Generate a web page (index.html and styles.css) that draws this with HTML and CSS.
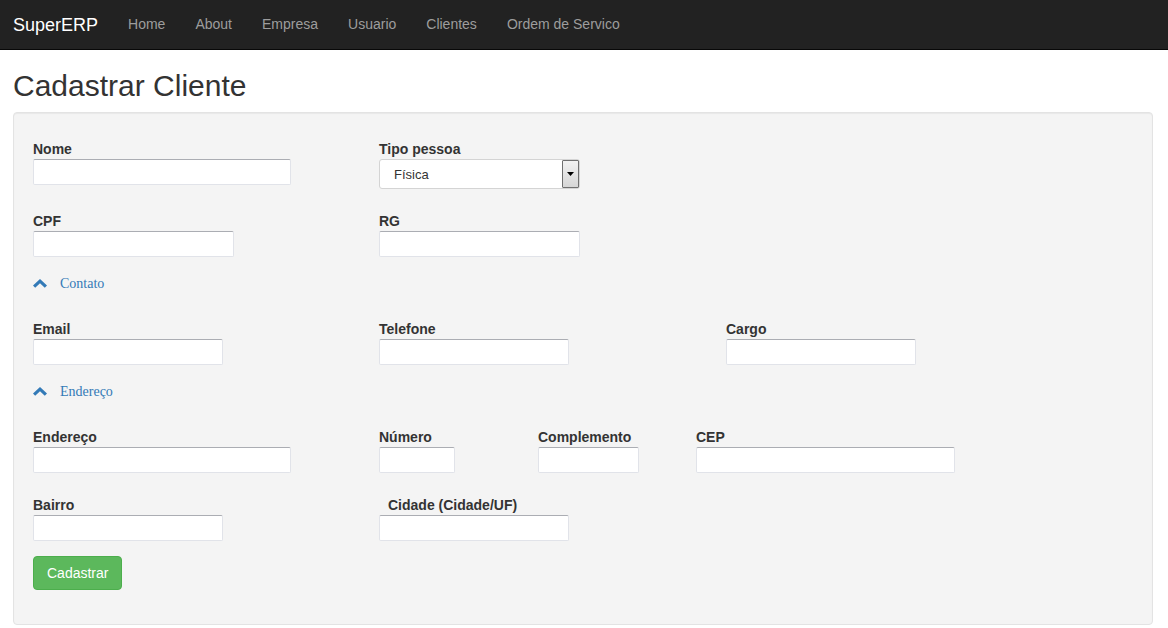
FILE: index.html
```html
<!DOCTYPE html>
<html lang="pt">
<head>
<meta charset="utf-8">
<title>Cadastrar Cliente</title>
<link rel="stylesheet" href="styles.css">
</head>
<body>
<nav class="navbar">
  <a class="brand" href="#">SuperERP</a>
  <ul class="nav">
    <li><a href="#">Home</a></li>
    <li><a href="#">About</a></li>
    <li><a href="#">Empresa</a></li>
    <li><a href="#">Usuario</a></li>
    <li><a href="#">Clientes</a></li>
    <li><a href="#">Ordem de Servico</a></li>
  </ul>
</nav>
<main class="main">
  <h2 class="title">Cadastrar Cliente</h2>
  <form class="well">
    <div class="row row-first">
      <div class="group col-4">
        <label>Nome</label>
        <input class="input w-258" type="text">
      </div>
      <div class="group col-4">
        <label>Tipo pessoa</label>
        <div class="select-wrap">
          <select class="select"><option>Física</option></select>
          <span class="select-btn"><svg width="7" height="4" viewBox="0 0 7 4"><polygon points="0,0 7,0 3.5,4" fill="#000"/></svg></span>
        </div>
      </div>
    </div>
    <div class="row row-before-link">
      <div class="group col-4">
        <label>CPF</label>
        <input class="input w-201" type="text">
      </div>
      <div class="group col-4">
        <label>RG</label>
        <input class="input w-201" type="text">
      </div>
    </div>
    <a class="toggle" href="#">
      <svg class="chev" width="14" height="9" viewBox="0 0 14 9"><polygon points="0,6.5 7,0 14,6.5 11.8,8.8 7,4.3 2.2,8.8" fill="#337ab7"/></svg>
      <span>Contato</span>
    </a>
    <div class="row row-before-link">
      <div class="group col-4">
        <label>Email</label>
        <input class="input w-190" type="text">
      </div>
      <div class="group col-4b">
        <label>Telefone</label>
        <input class="input w-190" type="text">
      </div>
      <div class="group col-4">
        <label>Cargo</label>
        <input class="input w-190" type="text">
      </div>
    </div>
    <a class="toggle" href="#">
      <svg class="chev" width="14" height="9" viewBox="0 0 14 9"><polygon points="0,6.5 7,0 14,6.5 11.8,8.8 7,4.3 2.2,8.8" fill="#337ab7"/></svg>
      <span>Endereço</span>
    </a>
    <div class="row row-mid">
      <div class="group col-4">
        <label>Endereço</label>
        <input class="input w-258" type="text">
      </div>
      <div class="group col-num">
        <label>Número</label>
        <input class="input w-76" type="text">
      </div>
      <div class="group col-comp">
        <label>Complemento</label>
        <input class="input w-101" type="text">
      </div>
      <div class="group col-4">
        <label>CEP</label>
        <input class="input w-259" type="text">
      </div>
    </div>
    <div class="row row-last">
      <div class="group col-4">
        <label>Bairro</label>
        <input class="input w-190" type="text">
      </div>
      <div class="group col-4">
        <label class="indent">Cidade (Cidade/UF)</label>
        <input class="input w-190" type="text">
      </div>
    </div>
    <button class="btn-success" type="button">Cadastrar</button>
  </form>
</main>
</body>
</html>
```

FILE: styles.css
```css
* { box-sizing: border-box; }
html, body {
  margin: 0;
  padding: 0;
  background: #fff;
  font-family: "Liberation Sans", Arial, sans-serif;
  font-size: 14px;
  color: #333;
}
.navbar {
  display: flex;
  align-items: center;
  height: 50px;
  background: #222;
  border-bottom: 1px solid #080808;
}
.brand {
  padding: 0 15px 0 13px;
  font-size: 18px;
  line-height: 20px;
  color: #fff;
  text-decoration: none;
}
.nav {
  display: flex;
  list-style: none;
  margin: 0;
  padding: 0;
}
.nav a {
  display: block;
  padding: 14px 15px 15px;
  line-height: 20px;
  color: #9d9d9d;
  text-decoration: none;
}
.main {
  padding: 0 15px 0 13px;
}
.title {
  margin: 19px 0 10px;
  font-size: 30px;
  font-weight: 500;
  line-height: 33px;
  color: #333;
}
.well {
  background: #f4f4f4;
  border: 1px solid #e3e3e3;
  border-radius: 4px;
  box-shadow: inset 0 1px 1px rgba(0,0,0,0.05);
  padding: 26px 19px 34px;
}
.row {
  display: flex;
  align-items: flex-start;
}
.row-first { margin-bottom: 22px; }
.row-before-link { margin-bottom: 17px; }
.row-mid { margin-bottom: 22px; }
.row-last { margin-bottom: 15px; }
.col-4 { flex: none; width: 346px; }
.col-4b { flex: none; width: 347px; }
.col-num { flex: none; width: 159px; }
.col-comp { flex: none; width: 158px; }
.group label {
  display: block;
  font-weight: bold;
  font-size: 14px;
  line-height: 20px;
  color: #333;
}
.group label.indent { padding-left: 9px; }
.input {
  display: block;
  height: 26px;
  margin: 0;
  padding: 2px 4px;
  background: #fff;
  border: 1px solid #e1e3e9;
  border-top-color: #abadb3;
  border-radius: 2px;
  font: 13px "Liberation Sans", Arial, sans-serif;
}
.w-258 { width: 258px; }
.w-259 { width: 259px; }
.w-201 { width: 201px; }
.w-190 { width: 190px; }
.w-101 { width: 101px; }
.w-76 { width: 76px; }
.select-wrap {
  position: relative;
  width: 201px;
  height: 30px;
}
.select {
  display: block;
  width: 201px;
  height: 30px;
  margin: 0;
  padding: 0 0 0 14px;
  -webkit-appearance: none;
  appearance: none;
  background: #fff;
  border: 1px solid #d4d4d4;
  border-radius: 3px;
  font: 13px "Liberation Sans", Arial, sans-serif;
  color: #333;
}
.select-btn {
  position: absolute;
  top: 1px;
  right: 1px;
  width: 17px;
  height: 28px;
  display: flex;
  align-items: center;
  justify-content: center;
  background: linear-gradient(#f2f2f2, #d6d6d6);
  border: 1px solid #707070;
  border-radius: 1px;
}
.toggle {
  display: flex;
  align-items: center;
  height: 20px;
  margin: 0 0 25px;
  color: #337ab7;
  text-decoration: none;
  font-family: "Liberation Serif", "Times New Roman", serif;
  font-size: 14px;
  line-height: 20px;
}
.chev {
  margin: 0 13px 2px 0;
}
.btn-success {
  display: block;
  height: 34px;
  padding: 6px 13px;
  background: #5cb85c;
  border: 1px solid #4cae4c;
  border-radius: 4px;
  color: #fff;
  font: 14px "Liberation Sans", Arial, sans-serif;
  line-height: 20px;
}
```
